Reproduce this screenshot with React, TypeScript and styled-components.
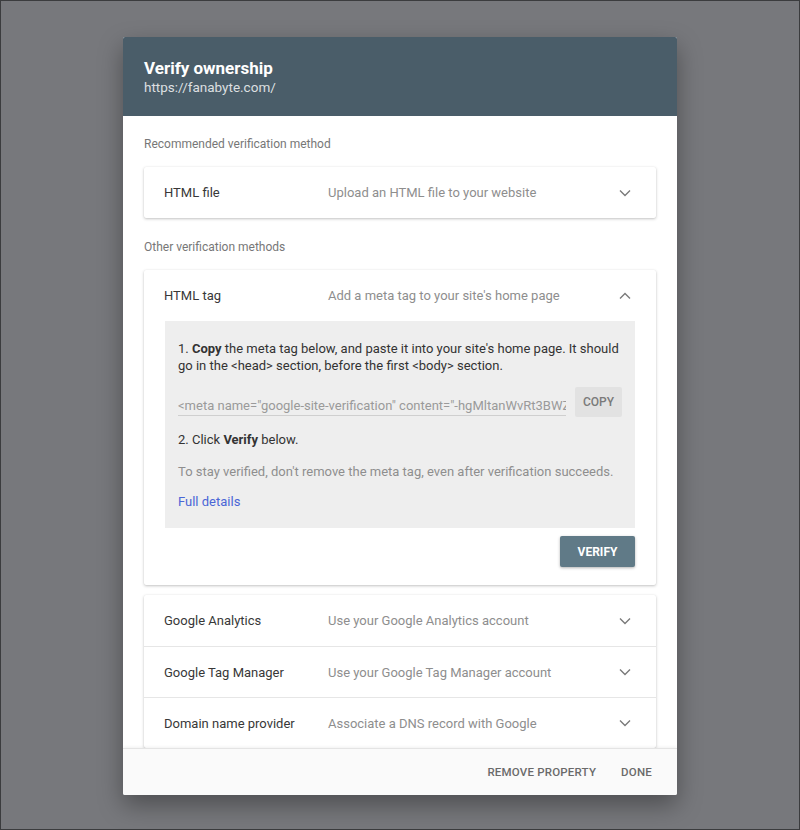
import React from "react";
import styled, { createGlobalStyle } from "styled-components";

const GlobalStyle = createGlobalStyle`
  html, body {
    margin: 0;
    padding: 0;
    background: #77787c;
    font-family: Roboto, "Liberation Sans", Arial, sans-serif;
  }
  * { box-sizing: border-box; }
`;

const Backdrop = styled.div`
  height: 830px;
  border: 1px solid #3b3c3e;
  background: #77787c;
  padding-top: 36px;
  display: flex;
  justify-content: center;
  align-items: flex-start;
`;

const Dialog = styled.div`
  width: 554px;
  height: 758px;
  background: #fff;
  border-radius: 2px;
  box-shadow: 0 10px 24px rgba(0, 0, 0, 0.35);
  display: flex;
  flex-direction: column;
  overflow: hidden;
`;

const Header = styled.div`
  height: 79px;
  background: #4a5d69;
  padding: 20px 21px 0;
  color: #fff;
  flex-shrink: 0;
`;

const Title = styled.div`
  font-size: 17px;
  font-weight: 700;
  line-height: 22px;
`;

const Url = styled.div`
  font-size: 13.5px;
  line-height: 17px;
  color: rgba(255, 255, 255, 0.82);
`;

const Body = styled.div`
  flex: 1;
  overflow: hidden;
  padding: 20px 21px 0;
`;

const SectionLabel = styled.div`
  font-size: 12px;
  color: #777;
  line-height: 16px;
  margin-bottom: 15px;
`;

const Card = styled.div<{ $gap?: number }>`
  background: #fff;
  box-shadow: 0 1px 3px rgba(0, 0, 0, 0.24), 0 0 1px rgba(0, 0, 0, 0.08);
  border-radius: 2px;
  margin-bottom: ${(p) => p.$gap ?? 0}px;
`;

const Row = styled.div<{ $divider?: boolean }>`
  height: 51px;
  display: flex;
  align-items: center;
  padding: 0 20px;
  border-top: ${(p) => (p.$divider ? "1px solid #e6e6e6" : "none")};
`;

const MethodName = styled.div`
  width: 164px;
  font-size: 13px;
  color: #383838;
`;

const MethodHint = styled.div`
  flex: 1;
  font-size: 13px;
  color: #8e8e8e;
`;

const Chevron = styled.svg`
  width: 12px;
  height: 8px;
  margin-right: 5px;
  flex-shrink: 0;
`;

const Panel = styled.div`
  margin: 0 21px;
  background: #eeeeee;
  padding: 19px 13px 18px;
  font-size: 13px;
  color: #333;
  line-height: 17px;
`;

const Step = styled.p<{ $muted?: boolean; $gap?: number }>`
  margin: 0 0 ${(p) => p.$gap ?? 15}px;
  color: ${(p) => (p.$muted ? "#8e8e8e" : "#333")};
`;

const TagRow = styled.div`
  display: flex;
  align-items: flex-end;
  gap: 9px;
  margin: 0 0 14px;
`;

const TagField = styled.div`
  flex: 1;
  min-width: 0;
  overflow: hidden;
  white-space: nowrap;
  font-size: 13px;
  color: #9a9a9a;
  border-bottom: 1px solid #cfcfcf;
  padding: 0 0 1px;
  margin-bottom: 1px;
`;

const CopyButton = styled.button`
  width: 47px;
  height: 30px;
  flex-shrink: 0;
  border: none;
  border-radius: 2px;
  background: #e2e2e2;
  color: #7a7a7a;
  font-family: inherit;
  font-size: 12px;
  font-weight: 500;
  padding: 0;
`;

const Link = styled.a`
  color: #4a66d6;
  text-decoration: none;
`;

const Actions = styled.div`
  display: flex;
  justify-content: flex-end;
  padding: 8px 21px 18px;
`;

const VerifyButton = styled.button`
  width: 75px;
  height: 31px;
  border: none;
  border-radius: 2px;
  background: #607a87;
  color: #fff;
  font-family: inherit;
  font-size: 12px;
  font-weight: 700;
  box-shadow: 0 1px 3px rgba(0, 0, 0, 0.3);
`;

const Footer = styled.div`
  height: 47px;
  flex-shrink: 0;
  background: #fafafa;
  border-top: 1px solid #e4e4e4;
  box-shadow: 0 -1px 3px rgba(0, 0, 0, 0.06);
  display: flex;
  justify-content: flex-end;
  align-items: center;
  gap: 25px;
  padding: 0 25px 0 0;
`;

const TextButton = styled.span`
  font-size: 11.5px;
  font-weight: 500;
  color: #6a6a6a;
  letter-spacing: 0.2px;
`;

const ChevronIcon = ({ up }: { up?: boolean }) => (
  <Chevron viewBox="0 0 12 8">
    <polyline
      points={up ? "1,6.5 6,1.5 11,6.5" : "1,1.5 6,6.5 11,1.5"}
      fill="none"
      stroke="#7a7a7a"
      strokeWidth="1.4"
    />
  </Chevron>
);

const others = [
  { name: "Google Analytics", hint: "Use your Google Analytics account" },
  { name: "Google Tag Manager", hint: "Use your Google Tag Manager account" },
  { name: "Domain name provider", hint: "Associate a DNS record with Google" },
];

export default function App() {
  return (
    <>
      <GlobalStyle />
      <Backdrop>
        <Dialog>
          <Header>
            <Title>Verify ownership</Title>
            <Url>https://fanabyte.com/</Url>
          </Header>
          <Body>
            <SectionLabel>Recommended verification method</SectionLabel>
            <Card $gap={21}>
              <Row>
                <MethodName>HTML file</MethodName>
                <MethodHint>Upload an HTML file to your website</MethodHint>
                <ChevronIcon />
              </Row>
            </Card>

            <SectionLabel>Other verification methods</SectionLabel>
            <Card $gap={10}>
              <Row>
                <MethodName>HTML tag</MethodName>
                <MethodHint>Add a meta tag to your site's home page</MethodHint>
                <ChevronIcon up />
              </Row>
              <Panel>
                <Step $gap={13}>
                  1. <b>Copy</b> the meta tag below, and paste it into your site's home page. It
                  should go in the &lt;head&gt; section, before the first &lt;body&gt; section.
                </Step>
                <TagRow>
                  <TagField>
                    &lt;meta name="google-site-verification" content="-hgMltanWvRt3BWZ9xYk" /&gt;
                  </TagField>
                  <CopyButton>COPY</CopyButton>
                </TagRow>
                <Step>
                  2. Click <b>Verify</b> below.
                </Step>
                <Step $muted $gap={13}>
                  To stay verified, don't remove the meta tag, even after verification succeeds.
                </Step>
                <Link href="#">Full details</Link>
              </Panel>
              <Actions>
                <VerifyButton>VERIFY</VerifyButton>
              </Actions>
            </Card>

            <Card>
              {others.map((m, i) => (
                <Row key={m.name} $divider={i > 0}>
                  <MethodName>{m.name}</MethodName>
                  <MethodHint>{m.hint}</MethodHint>
                  <ChevronIcon />
                </Row>
              ))}
            </Card>
          </Body>
          <Footer>
            <TextButton>REMOVE PROPERTY</TextButton>
            <TextButton>DONE</TextButton>
          </Footer>
        </Dialog>
      </Backdrop>
    </>
  );
}
